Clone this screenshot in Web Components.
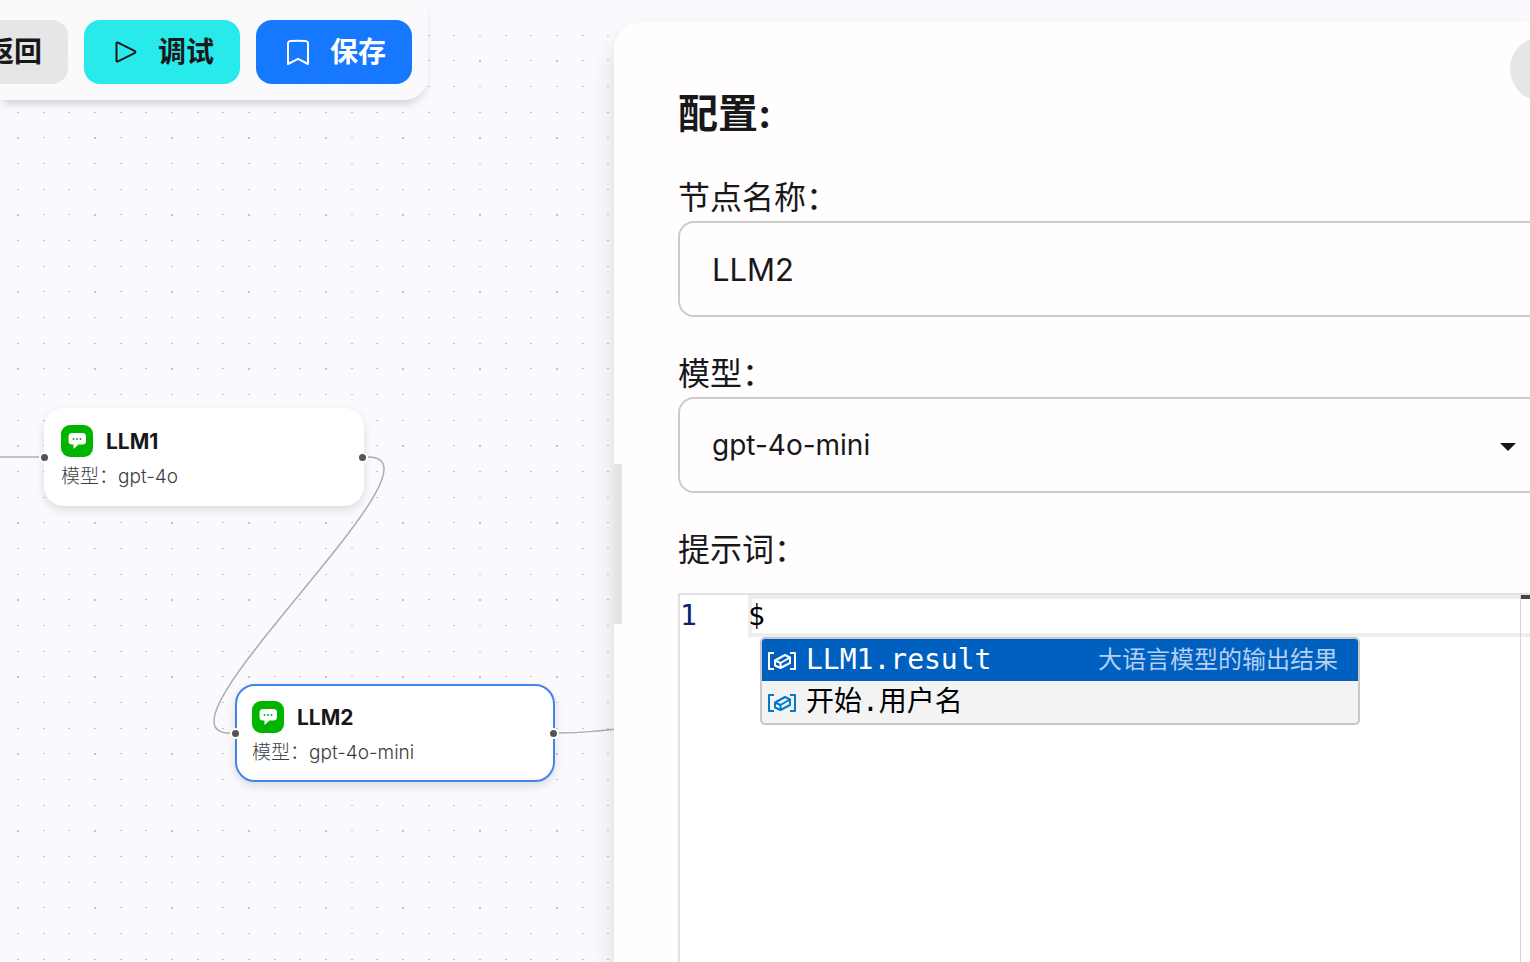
<!DOCTYPE html>
<html lang="zh-CN">
<head>
<meta charset="utf-8">
<meta name="viewport" content="width=device-width, initial-scale=1">
<title>工作流编辑</title>
<style>
body { margin: 0; font-family: Inter, "Noto Sans CJK SC", sans-serif; color: #18181b; }
</style>
</head>
<body>
<flow-app></flow-app>
<script>
const define = (name, html, setup) => {
  const template = document.createElement('template');
  template.innerHTML = html;
  customElements.define(name, class extends HTMLElement {
    constructor() {
      super();
      this.attachShadow({ mode: 'open' }).append(template.content.cloneNode(true));
    }
    connectedCallback() { if (setup) setup(this, this.shadowRoot); }
  });
};

define('tool-button', `
<style>
:host { display: block; flex: none; }
button { display: flex; align-items: center; justify-content: center; gap: 20px; width: 156px; height: 64px;
  padding: 0; border: 0; border-radius: 16px; font: inherit; font-size: 28px; font-weight: 700; line-height: 40px;
  white-space: nowrap; background: var(--fill, #e6e6e6); color: var(--ink, #18181b); }
</style>
<button type="button"><slot name="icon"></slot><slot></slot></button>`);

define('tool-bar', `
<style>
:host { display: flex; justify-content: flex-end; gap: 16px; width: 428px; height: 100px; padding: 20px 16px 16px 0;
  box-sizing: border-box; border-radius: 0 0 24px 0; background: #fafafcd9; box-shadow: 0 7px 8px -3px #00000029; }
svg { width: 28px; height: 28px; fill: none; stroke: currentColor; stroke-width: 2; stroke-linejoin: round; stroke-linecap: round; }
.debug { --fill: #29eaea; }
.save { --fill: #1677ff; --ink: #fff; }
</style>
<tool-button><svg slot="icon" viewBox="0 0 28 28" aria-hidden="true"><path d="M12 6 4 14l8 8M4 14h20"/></svg>返回</tool-button>
<tool-button class="debug"><svg slot="icon" viewBox="0 0 28 28" aria-hidden="true"><path d="M6.5 5.600v16.800q0 1.700 1.500.9L24.500 15.200q1.800-1.200 0-2.400L8 4.700q-1.500-.8-1.500.9z"/></svg>调试</tool-button>
<tool-button class="save"><svg slot="icon" viewBox="0 0 28 28" aria-hidden="true"><path d="M6 4.800Q6.500 3.200 8.500 3q7.500-.7 15 0 2 .2 2.500 1.800V26L16 20.800 6 26z"/></svg>保存</tool-button>`);

define('flow-node', `
<style>
:host { display: block; position: absolute; width: 320px; height: 98px; box-sizing: border-box; padding: 15px;
  border: 2px solid #fff; border-radius: 20px; background: #fff; box-shadow: 0 4px 10px #0000001f; }
:host([selected]) { border-color: #4285e8; }
header { display: flex; align-items: end; gap: 13px; height: 32px; }
header svg { width: 32px; height: 32px; }
h3 { margin: 0; font-size: 21px; font-weight: 700; line-height: 30px; }
p { margin: 6px 0 0; font-size: 19px; font-weight: 300; line-height: 28px; white-space: nowrap; color: #3c3c40; }
i { position: absolute; top: 50%; width: 7px; height: 7px; margin-top: -5px; border: 2px solid #fff; border-radius: 50%; background: #555; }
.in { left: -7px; }
.out { right: -6px; }
</style>
<header>
<svg viewBox="0 0 32 32" aria-hidden="true"><rect width="32" height="32" rx="9" fill="#00b400"/><path d="M11 8h10.500q3.500 0 3.500 3.500v4.500q0 3.500-3.500 3.500h-4L12.500 24v-4.500H11q-3.500 0-3.500-3.500v-4.500Q7.500 8 11 8z" fill="#fff"/><g fill="#00b400"><circle cx="12.500" cy="14" r="1"/><circle cx="16" cy="14" r="1"/><circle cx="19.500" cy="14" r="1"/></g></svg>
<h3><slot></slot></h3>
</header>
<p><slot name="model"></slot></p>
<i class="in"></i><i class="out"></i>`);

define('flow-canvas', `
<style>
:host { display: block; position: relative; overflow: hidden; background: #f9f9fe; }
.board { position: absolute; inset: 0; width: 100%; height: 100%; }
.first { left: 44px; top: 408px; }
.second { left: 235px; top: 684px; }
tool-bar { position: relative; }
</style>
<svg class="board" aria-hidden="true">
<defs><pattern id="dots" width="77" height="77" patternUnits="userSpaceOnUse">
<path fill="#c3c3cb" d="M17 35h2v1h-2zM43 35h2v1h-2zM68 35h2v1h-2zM17 60h2v2h-2zM43 60h2v1h-2zM68 60h2v1h-2zM17 9h2v1h-2zM43 9h2v1h-2zM68 9h2v1h-2z"/>
</pattern></defs>
<rect y="22" width="100%" height="100%" fill="url(#dots)"/>
<g fill="none" stroke="#acacb2" stroke-width="1.500">
<path d="M0 457H40"/><path d="M368 457C457 457 141 733 230 733"/><path d="M558 733C582 733 600 731 640 726"/>
</g>
</svg>
<flow-node class="first">LLM1<span slot="model">模型：gpt-4o</span></flow-node>
<flow-node class="second" selected>LLM2<span slot="model">模型：gpt-4o-mini</span></flow-node>
<tool-bar></tool-bar>`);

define('form-field', `
<style>
:host { display: block; position: relative; margin: 0 -32px 33px 0; }
label { display: block; font-size: 32px; line-height: 47px; }
input, select { display: block; width: 100%; height: 96px; box-sizing: border-box; padding: 0 32px; margin: 0;
  border: 2px solid #ccc; border-radius: 16px; background: #fffdfe; color: inherit; font: inherit; appearance: none; outline: 0; }
input { font-size: 31px; }
select { font-size: 28px; }
svg { position: absolute; right: 46px; bottom: 41px; width: 16px; height: 9px; pointer-events: none; }
[hidden] { display: none; }
</style>
<label for="control"></label>
<div></div>
<svg viewBox="0 0 16 9" aria-hidden="true" hidden><path d="M0 0h16L8 8z" fill="#18181b"/></svg>`,
(host, root) => {
  const kind = host.getAttribute('kind');
  const value = host.getAttribute('value');
  const control = document.createElement(kind);
  control.id = 'control';
  if (kind === 'select') {
    control.add(new Option(value, value));
    root.querySelector('svg').removeAttribute('hidden');
  } else {
    control.type = 'text';
    control.value = value;
  }
  root.querySelector('label').textContent = host.getAttribute('label');
  root.querySelector('div').replaceWith(control);
});

define('suggest-item', `
<style>
:host { display: flex; align-items: center; gap: 10px; height: 42px; padding: 0 20px 0 6px; white-space: nowrap;
  font: 28px/42px "DejaVu Sans Mono", "Noto Sans CJK SC", monospace; color: #000; }
:host([selected]) { background: #0060c0; color: #fff; }
svg { flex: none; width: 28px; height: 28px; fill: none; stroke: #007acc; stroke-width: 2; stroke-linejoin: round; }
:host([selected]) svg { stroke: #fff; }
.detail { margin-left: auto; font: 24px/42px Inter, "Noto Sans CJK SC", sans-serif; color: #b5cff0; }
</style>
<svg viewBox="0 0 28 28" aria-hidden="true"><path d="M6 7H1v16h5M22 7h5v16h-5"/><path d="M7 14.500 17 9l5 2.500v5.500l-9.500 5L7 19.500zM7 14.500l5.500 2.500L22 11.500M12.500 17v5"/></svg>
<slot></slot><span class="detail"><slot name="detail"></slot></span>`);

define('code-editor', `
<style>
:host { display: block; position: relative; flex: 1; min-height: 360px; box-sizing: border-box; border: 2px solid #e2e2e2;
  border-right: 0; border-bottom: 0; background: #fff; font: 28px/42px "DejaVu Sans Mono", "Noto Sans CJK SC", monospace; }
.line { display: flex; height: 42px; }
.number { flex: none; width: 68px; color: #0b216f; }
input { flex: 1; min-width: 0; height: 42px; margin: 0 -4px 0 0; padding: 0; border: 0; box-shadow: inset 0 0 0 4px #eee;
  background: none; font: inherit; color: #000; outline: 0; }
.menu { position: absolute; left: 80px; top: 42px; width: 600px; box-sizing: border-box; border: 2px solid #c8c8c8; border-radius: 5px; background: #f3f3f3; overflow: hidden; }
.ruler { position: absolute; right: 0; top: 0; bottom: 0; width: 9px; border-left: 1px solid #d4d4d4; }
.ruler::before { content: ""; display: block; height: 4px; background: #444; }
</style>
<div class="line"><span class="number">1</span><input type="text" value="$" aria-label="提示词"></div>
<div class="ruler"></div>
<div class="menu" role="listbox" aria-label="变量">
<suggest-item role="option" aria-selected="true" selected>LLM1.result<span slot="detail">大语言模型的输出结果</span></suggest-item>
<suggest-item role="option">开始.用户名</suggest-item>
</div>`);

define('config-panel', `
<style>
:host { display: block; position: relative; min-width: 0; padding-top: 22px; box-sizing: border-box; }
section { position: relative; display: flex; flex-direction: column; height: 100%; box-sizing: border-box; padding: 64px 0 0 64px;
  border-radius: 28px 0 0 0; background: #fffdfe; box-shadow: 0 16px 24px #00000024; }
h2 { margin: 0 0 32px; font-size: 40px; font-weight: 700; line-height: 56px; }
h4 { margin: 0 0 20px; font-size: 32px; font-weight: 400; line-height: 47px; }
.close { position: absolute; right: -44px; top: 15px; width: 64px; height: 64px; padding: 0; border: 0; border-radius: 50%; background: #e5e6e6; }
.grip { position: absolute; left: 0; top: 50%; width: 8px; height: 160px; margin-top: -28px; background: #e5e5e5; }
</style>
<section aria-label="配置">
<h2>配置:</h2>
<form-field kind="input" label="节点名称：" value="LLM2"></form-field>
<form-field kind="select" label="模型：" value="gpt-4o-mini"></form-field>
<h4>提示词：</h4>
<code-editor></code-editor>
<div class="grip"></div>
<button class="close" type="button" aria-label="关闭"></button>
</section>`);

define('flow-app', `
<style>
:host { display: grid; grid-template-columns: minmax(0, 614px) minmax(0, 1fr); min-height: 100vh; overflow: hidden; background: #f9f9fe; }
</style>
<flow-canvas></flow-canvas>
<config-panel></config-panel>`);
</script>
</body>
</html>
